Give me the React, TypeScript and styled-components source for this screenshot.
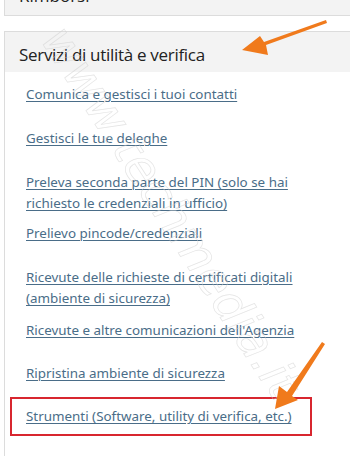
import React from "react";
import styled, { createGlobalStyle } from "styled-components";

const Global = createGlobalStyle`
  html, body { margin: 0; padding: 0; background: #fff; }
  body { width: 350px; height: 456px; overflow: hidden; position: relative; }
`;

const Page = styled.div`
  position: relative;
  width: 350px;
  height: 456px;
  overflow: hidden;
  padding-left: 4px;
  box-sizing: border-box;
`;

const TopCard = styled.div`
  width: 360px;
  height: 16px;
  border: 1px solid #dcdcdc;
  border-top: none;
  border-right: none;
  background: #f3f3f3;
  overflow: hidden;
  box-sizing: border-box;
`;

const TopTitle = styled.div`
  margin-top: -16px;
  padding-left: 14px;
  font-family: "Open Sans", "Noto Sans", sans-serif;
  font-size: 17px;
  line-height: 24px;
  color: #222;
`;

const Panel = styled.section`
  margin-top: 15px;
  width: 360px;
  border-top: 1px solid #dcdcdc;
  border-left: 1px solid #dcdcdc;
  height: 430px;
  box-sizing: border-box;
`;

const PanelHeader = styled.h2`
  margin: 0;
  height: 40px;
  background: #f3f3f3;
  padding: 4px 0 0 14px;
  display: flex;
  align-items: center;
  box-sizing: border-box;
  font-family: "Open Sans", "Noto Sans", sans-serif;
  font-weight: 500;
  font-size: 17px;
  letter-spacing: -0.3px;
  color: #222;
`;

const List = styled.div`
  display: flex;
  flex-direction: column;
  padding: 12px 0 0 6px;
`;

const Item = styled.div<{ $gap: number }>`
  margin-bottom: ${(p) => p.$gap}px;
  padding-left: 15px;
  width: 320px;
  font-family: "Noto Sans", "Open Sans", sans-serif;
  font-size: 13.4px;
  line-height: 21px;
`;

const Highlight = styled.div`
  margin-left: -1px;
  margin-top: -1px;
  width: 302px;
  height: 39px;
  border: 2px solid #d8262f;
  box-sizing: border-box;
  display: flex;
  align-items: center;
  padding-left: 14px;
  font-family: "Noto Sans", "Open Sans", sans-serif;
  font-size: 13.4px;
  line-height: 21px;
  white-space: nowrap;
`;

const Link = styled.a`
  color: #4a6d88;
  text-decoration: underline;
  text-decoration-thickness: 1px;
  text-underline-offset: 2px;
  cursor: pointer;
`;

const Overlay = styled.svg`
  position: absolute;
  left: 0;
  top: 0;
  pointer-events: none;
`;

const items: { text: React.ReactNode; gap: number }[] = [
  { text: "Comunica e gestisci i tuoi contatti", gap: 23 },
  { text: "Gestisci le tue deleghe", gap: 23 },
  {
    text: (
      <>
        Preleva seconda parte del PIN (solo se hai
        <br />
        richiesto le credenziali in ufficio)
      </>
    ),
    gap: 9,
  },
  { text: "Prelievo pincode/credenziali", gap: 23 },
  {
    text: (
      <>
        Ricevute delle richieste di certificati digitali
        <br />
        (ambiente di sicurezza)
      </>
    ),
    gap: 11,
  },
  { text: "Ricevute e altre comunicazioni dell'Agenzia", gap: 22 },
  { text: "Ripristina ambiente di sicurezza", gap: 14 },
];

export default function App() {
  return (
    <>
      <Global />
      <Page>
        <TopCard>
          <TopTitle>Rimborsi</TopTitle>
        </TopCard>
        <Panel>
          <PanelHeader>Servizi di utilità e verifica</PanelHeader>
          <List>
            {items.map((it, i) => (
              <Item key={i} $gap={it.gap}>
                <Link>{it.text}</Link>
              </Item>
            ))}
            <Highlight>
              <Link>Strumenti (Software, utility di verifica, etc.)</Link>
            </Highlight>
          </List>
        </Panel>
        <Overlay width="350" height="456" viewBox="0 0 350 456">
          <text
            x="0"
            y="0"
            transform="translate(40 40) rotate(57)"
            fontFamily="'DejaVu Sans', sans-serif"
            fontSize="48"
            fontStyle="italic"
            fill="none"
            stroke="#cfcfcf"
            strokeWidth="0.7"
            opacity="0.55"
          >
            www.techmedia.it
          </text>
          <polygon
            points="326,20 327,23 266,45 268,55 242,50 260,36 264,42"
            fill="#f07a1c"
          />
          <polygon
            points="322,342 325,344 292,396 298,400 275,409 279,386 287,392"
            fill="#f07a1c"
          />
        </Overlay>
      </Page>
    </>
  );
}
